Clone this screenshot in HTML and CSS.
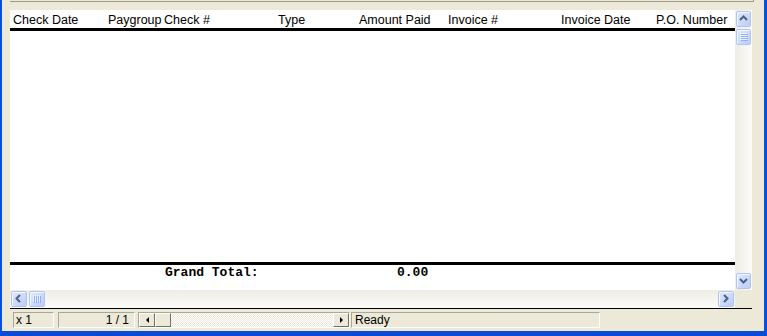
FILE: index.html
```html
<!DOCTYPE html>
<html lang="en">
<head>
  <meta charset="UTF-8">
  <title>Check Register Preview</title>
  <link rel="stylesheet" href="styles.css">
</head>
<body>
  <div class="window">
    <div class="topbar"></div>

    <div class="viewer">
      <div class="report">
        <div class="row head">
          <span>Check Date</span>
          <span>Paygroup</span>
          <span>Check #</span>
          <span>Type</span>
          <span>Amount Paid</span>
          <span>Invoice #</span>
          <span>Invoice Date</span>
          <span>P.O. Number</span>
        </div>
        <div class="rule"></div>
        <div class="detail"></div>
        <div class="rule"></div>
        <div class="row total">
          <span class="total-label">Grand Total:</span>
          <span>0.00</span>
        </div>
      </div>

      <!-- vertical scrollbar -->
      <div class="vscroll">
        <div class="sb-btn">
          <svg width="15" height="15" viewBox="0 0 15 15"><path d="M4 9 L7.5 5.5 L11 9" /></svg>
        </div>
        <div class="sb-thumb vthumb">
          <svg width="15" height="15" viewBox="0 0 15 15">
            <path class="grip-light" d="M4 4.5h7M4 6.5h7M4 8.5h7M4 10.5h7" />
            <path class="grip-dark" d="M5 5.5h7M5 7.5h7M5 9.5h7M5 11.5h7" />
          </svg>
        </div>
        <div class="sb-track"></div>
        <div class="sb-btn">
          <svg width="15" height="15" viewBox="0 0 15 15"><path d="M4 6 L7.5 9.5 L11 6" /></svg>
        </div>
      </div>

      <!-- horizontal scrollbar -->
      <div class="hscroll">
        <div class="sb-btn">
          <svg width="15" height="15" viewBox="0 0 15 15"><path d="M9 4 L5.5 7.5 L9 11" /></svg>
        </div>
        <div class="sb-thumb hthumb">
          <svg width="15" height="15" viewBox="0 0 15 15">
            <path class="grip-light" d="M4.5 4v7M6.5 4v7M8.5 4v7M10.5 4v7" />
            <path class="grip-dark" d="M5.5 5v7M7.5 5v7M9.5 5v7M11.5 5v7" />
          </svg>
        </div>
        <div class="sb-track"></div>
        <div class="sb-btn">
          <svg width="15" height="15" viewBox="0 0 15 15"><path d="M6 4 L9.5 7.5 L6 11" /></svg>
        </div>
      </div>
      <div class="corner"></div>
    </div>

    <div class="status">
      <div class="pane zoom">x 1</div>
      <div class="pane pages">1 / 1</div>
      <div class="nav">
        <div class="nav-btn"><span class="tri tri-left"></span></div>
        <div class="nav-thumb"></div>
        <div class="nav-track"></div>
        <div class="nav-btn"><span class="tri tri-right"></span></div>
      </div>
      <div class="pane msg">Ready</div>
    </div>
  </div>
</body>
</html>
```

FILE: styles.css
```css
/* Page frame */
html, body {
  margin: 0;
  padding: 0;
}

body {
  width: 767px;
  height: 336px;
  overflow: hidden;
  font-family: "Liberation Sans", Arial, sans-serif;
}

.window {
  box-sizing: border-box;
  width: 767px;
  height: 336px;
  background: #ece9d8;
  border-left: 2px solid #0a50de;
  border-right: 3px solid #0a50de;
  border-bottom: 5px solid #0a4ad6;
  box-shadow: inset 0 -1px 0 #ece9d8;
}

.topbar {
  height: 1px;
  width: 743px;
  margin: 0 0 8px 8px;
  border-bottom: 1px solid #9d9a8c;
  border-right: 1px solid #9d9a8c;
}

/* Report viewer */
.viewer {
  display: grid;
  grid-template-columns: 725px 17px;
  grid-template-rows: 280px 18px;
  margin-left: 8px;
}

.report {
  display: flex;
  flex-direction: column;
  background: #fff;
}

.row {
  display: grid;
  grid-template-columns: 95px 56px 114px 81px 89px 113px 95px 1fr;
  padding-left: 3px;
  white-space: nowrap;
}

.head {
  height: 18px;
  box-sizing: border-box;
  padding-top: 3px;
  font-size: 12.5px;
  line-height: 15px;
  color: #000;
}

.rule {
  height: 3px;
  background: #000;
}

.detail {
  flex: 1;
}

.total {
  grid-template-columns: 232px 1fr;
  padding-left: 155px;
  height: 25px;
  font-family: "Liberation Mono", "Courier New", monospace;
  font-weight: bold;
  font-size: 13px;
  line-height: 15px;
}

/* XP style scrollbars */
.vscroll {
  display: flex;
  flex-direction: column;
  background: linear-gradient(to right, #eeede5, #fbfbf9);
}

.hscroll {
  display: flex;
  background: linear-gradient(to bottom, #eeede5, #fbfbf9);
}

.sb-track {
  flex: 1;
}

.sb-btn,
.sb-thumb {
  box-sizing: border-box;
  width: 15px;
  height: 15px;
  margin: 1px;
  border: 1px solid #b0c4f4;
  border-radius: 2px;
  background: linear-gradient(135deg, #dde7fd, #bccdf7);
  box-shadow: inset 1px 1px 0 #f4f8ff;
  flex: none;
}

.vscroll .sb-btn,
.vscroll .sb-thumb {
  width: 15px;
  height: 16px;
}

.hscroll .sb-btn,
.hscroll .sb-thumb {
  width: 16px;
  height: 16px;
}

.sb-btn svg,
.sb-thumb svg {
  display: block;
  margin: -1px;
  fill: none;
}

.sb-btn path {
  stroke: #4d6185;
  stroke-width: 2;
}

.grip-light {
  stroke: #eef4fe;
  stroke-width: 1;
}

.grip-dark {
  stroke: #8cb0f8;
  stroke-width: 1;
}

.corner {
  background: #ece9d8;
}

/* Status bar */
.status {
  display: flex;
  width: 742px;
  margin-left: 8px;
  padding: 3px 0 0 3px;
  box-sizing: border-box;
  border-top: 1px solid #000;
  font-size: 12px;
  line-height: 14px;
  color: #000;
}

.pane {
  box-sizing: border-box;
  height: 16px;
  border: 1px solid;
  border-color: #aca899 #fff #fff #aca899;
  white-space: pre;
}

.zoom {
  width: 41px;
  padding-left: 2px;
  margin-right: 4px;
}

.pages {
  width: 77px;
  padding-right: 5px;
  text-align: right;
  margin-right: 3px;
}

.msg {
  width: 249px;
  margin-left: 1px;
  padding-left: 3px;
}

.nav {
  display: flex;
  width: 212px;
  height: 16px;
  box-sizing: border-box;
  border: 1px solid;
  border-color: #aca899 #fff #fff #aca899;
}

.nav-btn,
.nav-thumb {
  box-sizing: border-box;
  width: 16px;
  height: 14px;
  border: 1px solid;
  border-color: #fff #716f64 #716f64 #fff;
  background: #ece9d8;
  display: flex;
  align-items: center;
  justify-content: center;
}

.nav-track {
  flex: 1;
  background-color: #fff;
  background-image: repeating-conic-gradient(#ece9d8 0 25%, #fff 0 50%);
  background-size: 2px 2px;
}

.tri {
  width: 0;
  height: 0;
  border-top: 3px solid transparent;
  border-bottom: 3px solid transparent;
}

.tri-left {
  border-right: 3px solid #000;
}

.tri-right {
  border-left: 3px solid #000;
}
```
